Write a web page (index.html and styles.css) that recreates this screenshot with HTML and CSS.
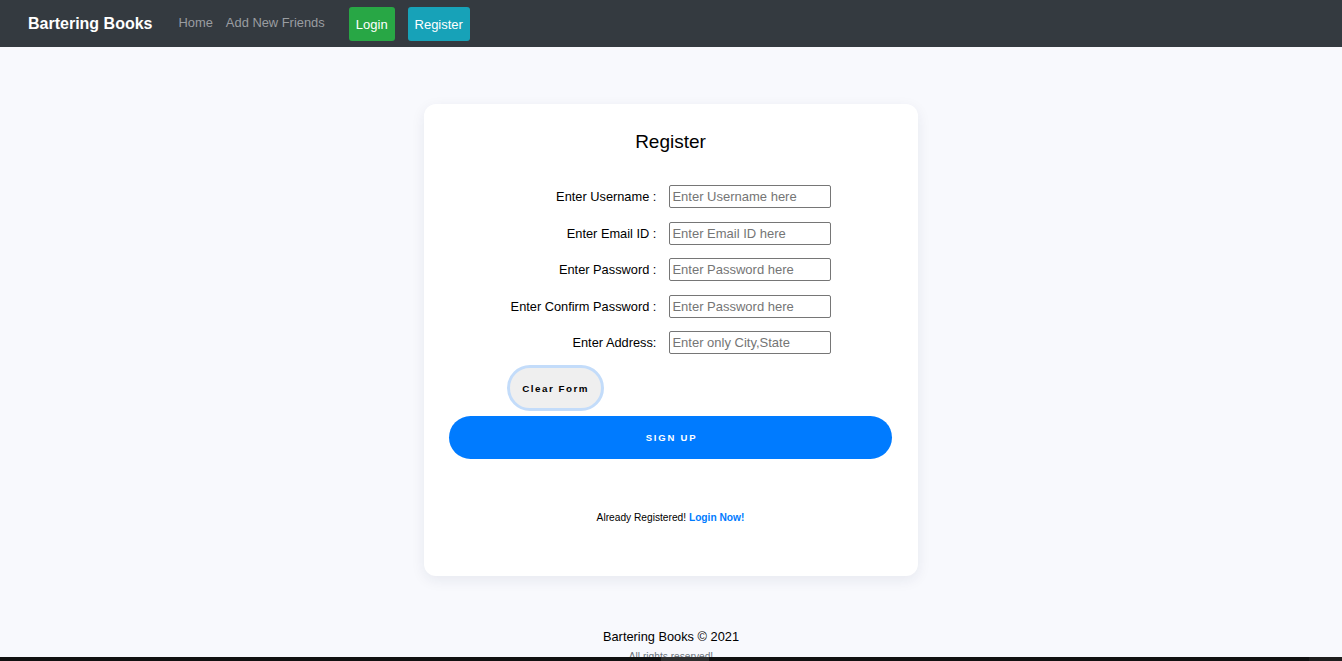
FILE: index.html
```html
<!DOCTYPE html>
<html lang="en">
<head>
<meta charset="utf-8">
<title>Register - Bartering Books</title>
<link rel="stylesheet" href="styles.css">
</head>
<body>
<nav class="navbar">
  <a class="brand" href="#">Bartering Books</a>
  <div class="nav-links">
    <a class="nav-link" href="#">Home</a>
    <a class="nav-link" href="#">Add New Friends</a>
  </div>
  <div class="nav-buttons">
    <a class="btn btn-login" href="#">Login</a>
    <a class="btn btn-register" href="#">Register</a>
  </div>
</nav>

<main class="main">
  <section class="card">
    <h1 class="card-title">Register</h1>
    <form class="form">
      <div class="grid">
        <label class="label" for="u">Enter Username :</label>
        <input class="input" id="u" type="text" placeholder="Enter Username here">
        <label class="label" for="e">Enter Email ID :</label>
        <input class="input" id="e" type="text" placeholder="Enter Email ID here">
        <label class="label" for="p">Enter Password :</label>
        <input class="input" id="p" type="text" placeholder="Enter Password here">
        <label class="label" for="c">Enter Confirm Password :</label>
        <input class="input" id="c" type="text" placeholder="Enter Password here">
        <label class="label" for="a">Enter Address:</label>
        <input class="input" id="a" type="text" placeholder="Enter only City,State">
        <button class="btn-clear" type="button">Clear Form</button>
      </div>
      <button class="btn-signup" type="button">SIGN UP</button>
    </form>
    <p class="already">Already Registered! <a class="login-now" href="#">Login Now!</a></p>
  </section>
</main>

<footer class="footer">
  <p class="footer-title">Bartering Books © 2021</p>
  <p class="footer-sub">All rights reserved!</p>
</footer>

<div class="bottom-bar">
  <span class="bar-thumb"></span>
  <span class="bar-end"></span>
</div>
</body>
</html>
```

FILE: styles.css
```css
* { box-sizing: border-box; }

html, body {
  margin: 0;
  padding: 0;
}

body {
  font-family: "Liberation Sans", Arial, sans-serif;
  background: #f8f9fd;
  color: #000;
  overflow: hidden;
  height: 661px;
}

.navbar {
  height: 47px;
  background: #343a40;
  display: flex;
  align-items: center;
  padding-left: 28px;
}

.brand {
  color: #fff;
  font-weight: bold;
  font-size: 16px;
  text-decoration: none;
  margin-right: 26px;
}

.nav-links {
  display: flex;
  gap: 13px;
  margin-top: -2px;
}

.nav-link {
  color: #9a9da1;
  font-size: 12.9px;
  text-decoration: none;
}

.nav-buttons {
  display: flex;
  gap: 13px;
  margin-left: 24px;
}

.btn {
  display: flex;
  align-items: center;
  justify-content: center;
  height: 34px;
  border-radius: 3px;
  color: #fff;
  font-size: 13px;
  text-decoration: none;
  padding-top: 1px;
}

.btn-login {
  width: 46px;
  background: #28a745;
}

.btn-register {
  width: 62px;
  background: #17a2b8;
}

.main {
  display: flex;
  justify-content: center;
  padding-top: 57px;
}

.card {
  width: 494px;
  height: 472px;
  background: #fff;
  border-radius: 12px;
  box-shadow: 0 4px 14px rgba(30, 40, 80, 0.08);
  padding: 27px 26px 0 25px;
  display: flex;
  flex-direction: column;
}

.card-title {
  margin: 0;
  font-size: 19px;
  font-weight: normal;
  text-align: center;
  line-height: 22px;
}

.form {
  margin-top: 32px;
  display: flex;
  flex-direction: column;
}

.grid {
  display: grid;
  grid-template-columns: auto 162px;
  justify-content: center;
  column-gap: 13px;
  row-gap: 13.5px;
  align-items: center;
  padding-left: 1px;
}

.label {
  font-size: 12.8px;
  text-align: right;
  white-space: nowrap;
}

.input {
  width: 162px;
  height: 23px;
  border: 1px solid #767676;
  border-radius: 2px;
  padding: 0 2px;
  font-family: "Liberation Sans", Arial, sans-serif;
  font-size: 13px;
  color: #000;
  background: #fff;
}

.input::placeholder {
  color: #757575;
}

.btn-clear {
  grid-column: 1;
  justify-self: start;
  margin-left: -4px;
  margin-top: -2.5px;
  width: 97px;
  height: 46px;
  border: 3px solid #c3dcfa;
  border-radius: 23px;
  background: #efefef;
  font-family: "Liberation Sans", Arial, sans-serif;
  font-size: 9.8px;
  font-weight: bold;
  letter-spacing: 1.5px;
  color: #000;
  padding: 0 0 0 1px;
}

.btn-signup {
  margin-top: 5px;
  height: 43px;
  width: 100%;
  border: none;
  border-radius: 22px;
  background: #007bff;
  color: #fff;
  font-family: "Liberation Sans", Arial, sans-serif;
  font-size: 9.5px;
  font-weight: bold;
  letter-spacing: 1.8px;
  padding: 0 0 0 2px;
}

.already {
  margin: 53px 0 0;
  text-align: center;
  font-size: 10.2px;
  line-height: 12px;
}

.login-now {
  color: #007bff;
  font-weight: bold;
  text-decoration: none;
}

.footer {
  text-align: center;
  padding-top: 53px;
}

.footer-title {
  margin: 0;
  font-size: 12.8px;
  line-height: 16px;
}

.footer-sub {
  margin: 6px 0 0;
  font-size: 10.2px;
  color: #6c757d;
  line-height: 12px;
}

.bottom-bar {
  position: fixed;
  left: 0;
  right: 0;
  bottom: 0;
  height: 4px;
  background: #111111;
}

.bar-thumb {
  position: absolute;
  left: 661px;
  width: 48px;
  top: 0;
  bottom: 0;
  background: #2e2e2e;
}

.bar-end {
  position: absolute;
  right: 0;
  width: 33px;
  top: 0;
  bottom: 0;
  background: #1e1e1e;
}
```
